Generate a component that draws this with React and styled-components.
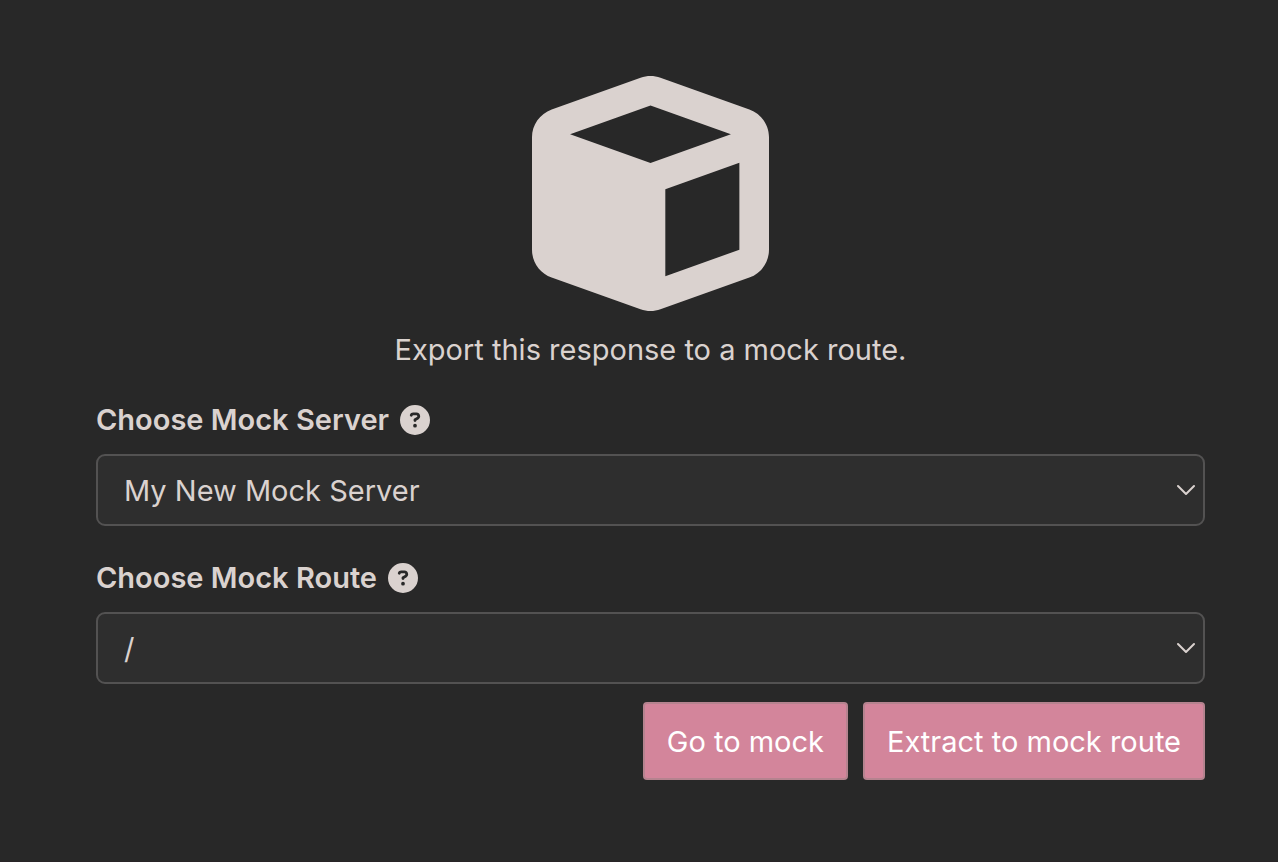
import React from "react";
import styled, { createGlobalStyle } from "styled-components";

const GlobalStyle = createGlobalStyle`
  *, *::before, *::after { box-sizing: border-box; }
  body {
    margin: 0;
    background: #282828;
    color: #dad2cf;
    font-family: Inter, "Liberation Sans", sans-serif;
    font-size: 29px;
    line-height: 36px;
  }
`;

const Pane = styled.main`
  display: flex;
  flex-direction: column;
  min-height: 100vh;
  padding: 75px 73px 75px 96px;
  border-bottom: 1px solid #292427;
`;

const Intro = styled.header`
  display: flex;
  flex-direction: column;
  align-items: center;
  gap: 20px;
`;

const Message = styled.p`
  margin: 0;
  text-align: center;
`;

const Icon = styled.svg`
  display: block;
  flex: none;
  width: ${({ $size }) => $size}px;
  height: ${({ $size }) => $size}px;
  fill: currentColor;
`;

const Form = styled.form`
  display: flex;
  flex-direction: column;
`;

const Field = styled.div`
  display: flex;
  flex-direction: column;
  gap: 16px;
  margin-top: 34px;
`;

const LabelRow = styled.div`
  display: flex;
  align-items: center;
  gap: 11px;
`;

const Label = styled.label`
  font-weight: 600;
`;

const SelectBox = styled.div`
  display: grid;
  align-items: center;

  & > * {
    grid-area: 1 / 1;
  }
`;

const Select = styled.select`
  appearance: none;
  width: 100%;
  height: 72px;
  margin: 0;
  padding: 2px 48px 0 26px;
  border: 2px solid #535252;
  border-radius: 9px;
  background: #2e2e2e;
  color: inherit;
  font: inherit;
`;

const Chevron = styled.svg`
  justify-self: end;
  width: 18px;
  height: 12px;
  margin-right: 10px;
  fill: none;
  stroke: currentColor;
  stroke-width: 2;
  stroke-linecap: round;
  stroke-linejoin: round;
  pointer-events: none;
`;

const Actions = styled.div`
  display: flex;
  justify-content: flex-end;
  gap: 15px;
  margin-top: 18px;
`;

const Button = styled.button`
  height: 78px;
  margin: 0;
  padding: 2px 22px 0;
  border: 2px solid #b5838f;
  border-radius: 4px;
  background: #d3859b;
  color: #fff;
  font: inherit;
  white-space: nowrap;
`;

const CubeIcon = () => (
  <Icon $size={237} viewBox="0 0 512 512" aria-hidden="true">
    <path d="M234.500 5.700c13.900-5 29.100-5 43.100 0l192 68.600C495 83.400 512 107.500 512 134.600V377.400c0 27-17 51.200-42.500 60.300l-192 68.600c-13.900 5-29.100 5-43.100 0l-192-68.600C17 428.600 0 404.500 0 377.400V134.600c0-27 17-51.200 42.500-60.300l192-68.600zM256 66L82.300 128 256 190l173.700-62L256 66zm32 368.600l160-57.100v-188L288 246.600v188z" />
  </Icon>
);

const HelpIcon = () => (
  <Icon $size={30} viewBox="0 0 512 512" aria-hidden="true">
    <path d="M256 512A256 256 0 1 0 256 0a256 256 0 1 0 0 512zM169.800 165.300c7.900-22.300 29.100-37.300 52.800-37.300h58.300c34.900 0 63.100 28.300 63.100 63.100c0 22.600-12.100 43.500-31.700 54.800L280 264.400c-.2 13-10.900 23.600-24 23.600c-13.300 0-24-10.700-24-24V250.500c0-8.600 4.600-16.500 12.100-20.800l44.300-25.400c4.700-2.700 7.600-7.700 7.600-13.100c0-8.400-6.800-15.100-15.100-15.100H222.600c-3.400 0-6.400 2.100-7.500 5.300l-.4 1.200c-4.400 12.500-18.200 19-30.600 14.600s-19-18.200-14.600-30.600l.4-1.200zM224 352a32 32 0 1 1 64 0 32 32 0 1 1 -64 0z" />
  </Icon>
);

function SelectField({ id, label, options }) {
  return (
    <Field>
      <LabelRow>
        <Label htmlFor={id}>{label}</Label>
        <HelpIcon />
      </LabelRow>
      <SelectBox>
        <Select id={id}>
          {options.map((option) => (
            <option key={option}>{option}</option>
          ))}
        </Select>
        <Chevron viewBox="0 0 18 12" aria-hidden="true">
          <path d="M1 2l8 8 8-8" />
        </Chevron>
      </SelectBox>
    </Field>
  );
}

export default function App() {
  return (
    <>
      <GlobalStyle />
      <Pane>
        <Intro>
          <CubeIcon />
          <Message>Export this response to a mock route.</Message>
        </Intro>
        <Form onSubmit={(event) => event.preventDefault()}>
          <SelectField
            id="mock-server"
            label="Choose Mock Server"
            options={["My New Mock Server"]}
          />
          <SelectField id="mock-route" label="Choose Mock Route" options={["/"]} />
          <Actions>
            <Button type="button">Go to mock</Button>
            <Button type="submit">Extract to mock route</Button>
          </Actions>
        </Form>
      </Pane>
    </>
  );
}
